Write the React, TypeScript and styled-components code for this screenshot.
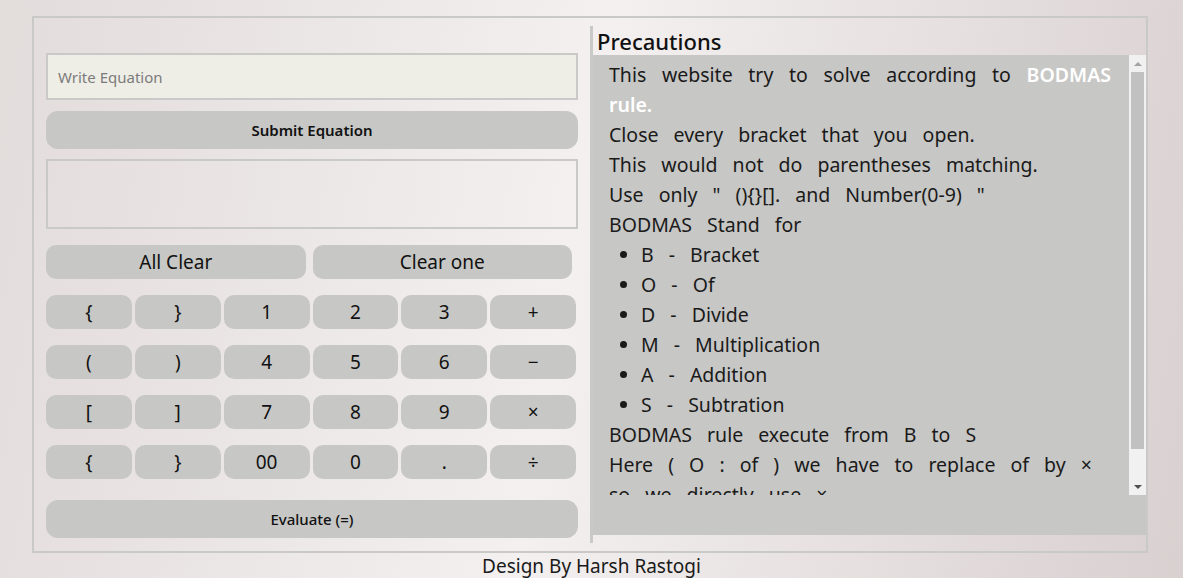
import React from "react";
import styled, { createGlobalStyle } from "styled-components";

const Global = createGlobalStyle`
  html, body {
    margin: 0;
    padding: 0;
  }
  body {
    width: 1183px;
    height: 578px;
    overflow: hidden;
    font-family: "Noto Sans", "Open Sans", sans-serif;
    background: linear-gradient(100deg, #e2dcdb 0%, #f3f0ef 48%, #d9d0d0 100%);
    color: #1a1a1a;
  }
`;

const Frame = styled.main`
  box-sizing: border-box;
  width: 1116px;
  height: 537px;
  margin: 16px 0 0 32px;
  border: 2px solid #c9c9c7;
  display: flex;
`;

const Calculator = styled.section`
  box-sizing: border-box;
  width: 556px;
  padding: 35px 12px 0 12px;
  display: flex;
  flex-direction: column;
`;

const EquationInput = styled.input`
  box-sizing: border-box;
  width: 532px;
  height: 47px;
  border: 2px solid #c9c9c7;
  background: #efeee6;
  padding: 0 10px;
  font-family: inherit;
  font-size: 15px;
  color: #333;
  outline: none;
  &::placeholder {
    color: #7b7b7b;
  }
`;

const WideButton = styled.button<{ $top: number; $weight: number }>`
  box-sizing: border-box;
  width: 532px;
  height: 38px;
  margin-top: ${(p) => p.$top}px;
  border: none;
  border-radius: 12px;
  background: #c7c7c5;
  font-family: inherit;
  font-size: 15px;
  font-weight: ${(p) => p.$weight};
  color: #111;
  padding: 0;
`;

const Output = styled.div`
  box-sizing: border-box;
  width: 532px;
  height: 70px;
  margin-top: 10px;
  border: 2px solid #c9c9c7;
`;

const ClearRow = styled.div`
  width: 526px;
  margin-top: 16px;
  display: grid;
  grid-template-columns: 1fr 1fr;
  column-gap: 7px;
`;

const Keypad = styled.div`
  width: 530px;
  margin-top: 16px;
  display: grid;
  grid-template-columns: repeat(6, 1fr);
  column-gap: 3px;
  row-gap: 16px;
`;

const Key = styled.button`
  box-sizing: border-box;
  height: 34px;
  border: none;
  border-radius: 10px;
  background: #c7c7c5;
  font-family: inherit;
  font-size: 19px;
  color: #111;
  padding: 0;
`;

const Precautions = styled.section`
  box-sizing: border-box;
  width: 556px;
  margin: 8px 0;
  border-left: 3px solid #c9c9c7;
  display: flex;
  flex-direction: column;
`;

const Heading = styled.h2`
  margin: 0;
  height: 29px;
  padding-left: 4px;
  font-size: 22px;
  font-weight: 500;
  line-height: 31px;
  color: #111;
`;

const Board = styled.div`
  height: 480px;
  background: #c7c7c5;
`;

const Viewport = styled.div`
  height: 440px;
  display: flex;
`;

const Scroller = styled.div`
  box-sizing: border-box;
  flex: 1;
  height: 440px;
  overflow: hidden;
  padding: 5px 18px 6px 16px;
  font-size: 19.5px;
  line-height: 30px;
  word-spacing: 10px;
  color: #1a1a1a;
`;

const Track = styled.div`
  width: 17px;
  height: 440px;
  background: #f1f1f1;
  display: flex;
  flex-direction: column;
  align-items: center;
`;

const Arrow = styled.div<{ $down?: boolean }>`
  height: 17px;
  width: 17px;
  display: flex;
  align-items: center;
  justify-content: center;
  &::before {
    content: "";
    width: 0;
    height: 0;
    border-left: 4px solid transparent;
    border-right: 4px solid transparent;
    ${(p) =>
      p.$down
        ? "border-top: 4px solid #505050;"
        : "border-bottom: 4px solid #a3a3a3;"}
  }
`;

const Thumb = styled.div`
  width: 13px;
  height: 377px;
  background: #c1c1c1;
`;

const Spacer = styled.div`
  flex: 1;
`;

const Note = styled.p<{ $justify?: boolean }>`
  margin: 0;
  text-align: ${(p) => (p.$justify ? "justify" : "left")};
`;

const Highlight = styled.strong`
  color: #ffffff;
  font-weight: 600;
`;

const Rules = styled.ul`
  margin: 0;
  padding-left: 32px;
`;

const Rule = styled.li``;

const Footer = styled.footer`
  text-align: center;
  font-size: 19px;
  line-height: 26px;
  color: #1a1a1a;
`;

const keys = [
  "{", "}", "1", "2", "3", "+",
  "(", ")", "4", "5", "6", "\u2212",
  "[", "]", "7", "8", "9", "\u00d7",
  "{", "}", "00", "0", ".", "\u00f7",
];

const rules = [
  ["B", "Bracket"],
  ["O", "Of"],
  ["D", "Divide"],
  ["M", "Multiplication"],
  ["A", "Addition"],
  ["S", "Subtration"],
];

export default function App() {
  return (
    <>
      <Global />
      <Frame>
        <Calculator>
          <EquationInput placeholder="Write Equation" />
          <WideButton $top={11} $weight={600}>Submit Equation</WideButton>
          <Output />
          <ClearRow>
            <Key>All Clear</Key>
            <Key>Clear one</Key>
          </ClearRow>
          <Keypad>
            {keys.map((k, i) => (
              <Key key={i}>{k}</Key>
            ))}
          </Keypad>
          <WideButton $top={21} $weight={500}>Evaluate (=)</WideButton>
        </Calculator>
        <Precautions>
          <Heading>Precautions</Heading>
          <Board>
            <Viewport>
              <Scroller>
                <Note $justify>
                  This website try to solve according to <Highlight>BODMAS rule.</Highlight>
                </Note>
                <Note>Close every bracket that you open.</Note>
                <Note>This would not do parentheses matching.</Note>
                <Note>Use only " (){"{}"}[]. and Number(0-9) "</Note>
                <Note>BODMAS Stand for</Note>
                <Rules>
                  {rules.map(([l, w]) => (
                    <Rule key={l}>
                      {l} - {w}
                    </Rule>
                  ))}
                </Rules>
                <Note>BODMAS rule execute from B to S</Note>
                <Note>Here ( O : of ) we have to replace of by ×</Note>
                <Note>so we directly use ×</Note>
              </Scroller>
              <Track>
                <Arrow />
                <Thumb />
                <Spacer />
                <Arrow $down />
              </Track>
            </Viewport>
          </Board>
        </Precautions>
      </Frame>
      <Footer>Design By Harsh Rastogi</Footer>
    </>
  );
}
